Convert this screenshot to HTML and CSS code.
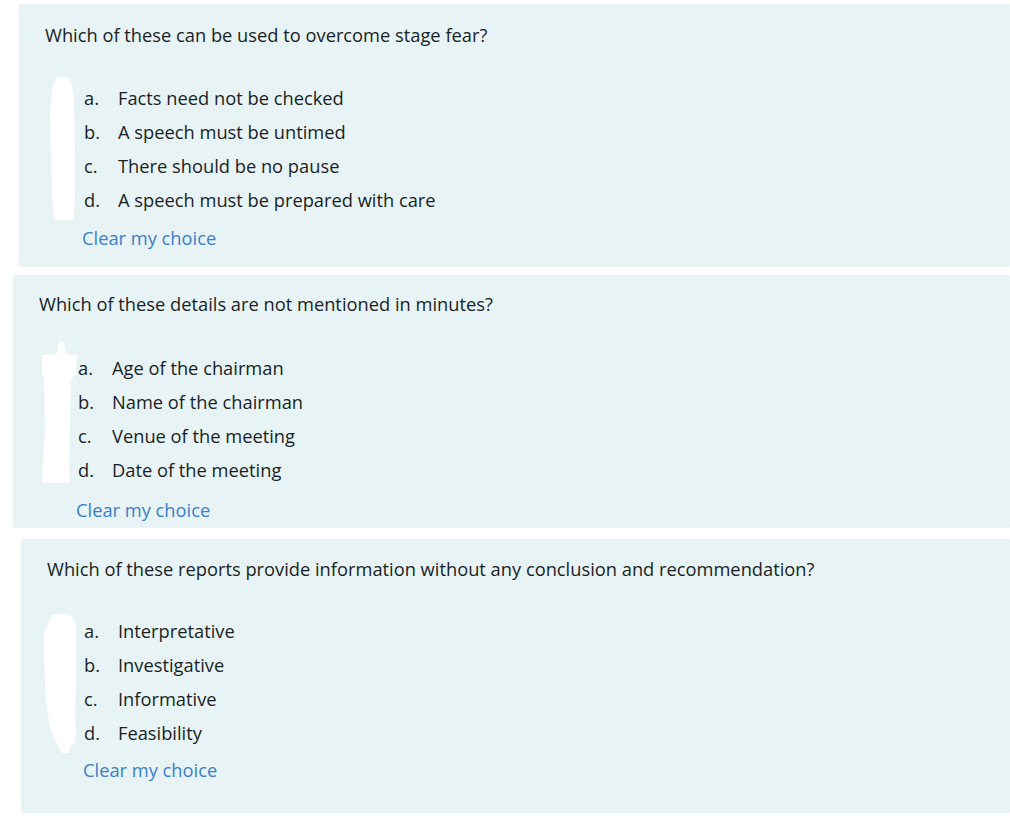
FILE: index.html
```html
<!DOCTYPE html>
<html>
<head>
<meta charset="utf-8">
<link rel="stylesheet" href="styles.css">
</head>
<body>
<div class="page">
  <section class="card card-1">
    <div class="question">Which of these can be used to overcome stage fear?</div>
    <div class="answers">
      <svg class="blob blob-1" width="30" height="148" viewBox="0 0 30 148"><path d="M8 2 Q16 0 22 3 L26 20 L27 80 L27 118 L26 140 L24 144 L6 144 L4 120 L3 80 L2 40 L4 12 Z" fill="#fff"/></svg>
      <div class="option"><span class="letter">a.</span><span>Facts need not be checked</span></div>
      <div class="option"><span class="letter">b.</span><span>A speech must be untimed</span></div>
      <div class="option"><span class="letter">c.</span><span>There should be no pause</span></div>
      <div class="option"><span class="letter">d.</span><span>A speech must be prepared with care</span></div>
    </div>
    <a class="clear" href="#">Clear my choice</a>
  </section>
  <section class="card card-2">
    <div class="question">Which of these details are not mentioned in minutes?</div>
    <div class="answers">
      <svg class="blob blob-2" width="40" height="146" viewBox="0 0 40 146"><path d="M19 2 L24 2 L26 14 L37 15 L36 34 L31 40 L30 90 L29 130 L30 143 L2 143 L3 120 L5 90 L4 40 L2 34 L2 15 L17 14 Z" fill="#fff"/></svg>
      <div class="option"><span class="letter">a.</span><span>Age of the chairman</span></div>
      <div class="option"><span class="letter">b.</span><span>Name of the chairman</span></div>
      <div class="option"><span class="letter">c.</span><span>Venue of the meeting</span></div>
      <div class="option"><span class="letter">d.</span><span>Date of the meeting</span></div>
    </div>
    <a class="clear" href="#">Clear my choice</a>
  </section>
  <section class="card card-3">
    <div class="question">Which of these reports provide information without any conclusion and recommendation?</div>
    <div class="answers">
      <svg class="blob blob-3" width="38" height="144" viewBox="0 0 38 144"><path d="M10 3 Q20 0 30 4 L34 15 L34 70 L33 100 L34 120 L33 130 L28 135 L27 141 L20 141 L14 130 L8 115 L4 90 L2 50 L2 20 Z" fill="#fff"/></svg>
      <div class="option"><span class="letter">a.</span><span>Interpretative</span></div>
      <div class="option"><span class="letter">b.</span><span>Investigative</span></div>
      <div class="option"><span class="letter">c.</span><span>Informative</span></div>
      <div class="option"><span class="letter">d.</span><span>Feasibility</span></div>
    </div>
    <a class="clear" href="#">Clear my choice</a>
  </section>
</div>
</body>
</html>
```
FILE: styles.css
```css
html, body {
  margin: 0;
  padding: 0;
  background: #ffffff;
}
body {
  font-family: "Open Sans", "Noto Sans", sans-serif;
  font-size: 18.3px;
  color: #1a1f24;
}
.page {
  padding-top: 4px;
  display: flex;
  flex-direction: column;
}
.card {
  background: #e7f3f5;
  display: flex;
  flex-direction: column;
  align-items: flex-start;
  padding-left: 26px;
  border-radius: 2px;
}
.card-1 { margin-left: 19px; padding-top: 19px; padding-bottom: 17px; }
.card-2 { margin-left: 13px; margin-top: 8px; padding-top: 17px; padding-bottom: 6px; }
.card-3 { margin-left: 21px; margin-top: 11px; padding-top: 18px; padding-bottom: 31px; }
.question {
  line-height: 24px;
}
.answers {
  position: relative;
  margin-top: 34px;
  padding-left: 39px;
}
.card-2 .answers { margin-top: 35px; }
.card-3 .answers { margin-top: 33px; padding-left: 37px; }
.option {
  display: flex;
  height: 34px;
  line-height: 34px;
}
.letter {
  width: 34px;
}
.clear {
  margin-top: 9px;
  margin-left: 37px;
  line-height: 24px;
  color: #3b80c6;
  text-decoration: none;
}
.card-2 .clear { margin-top: 11px; }
.card-3 .clear { margin-top: 8px; margin-left: 36px; }
.blob {
  position: absolute;
}
.blob-1 { left: 3px; top: -5px; }
.blob-2 { left: 1px; top: -11px; }
.blob-3 { left: -5px; top: -2px; }
```
